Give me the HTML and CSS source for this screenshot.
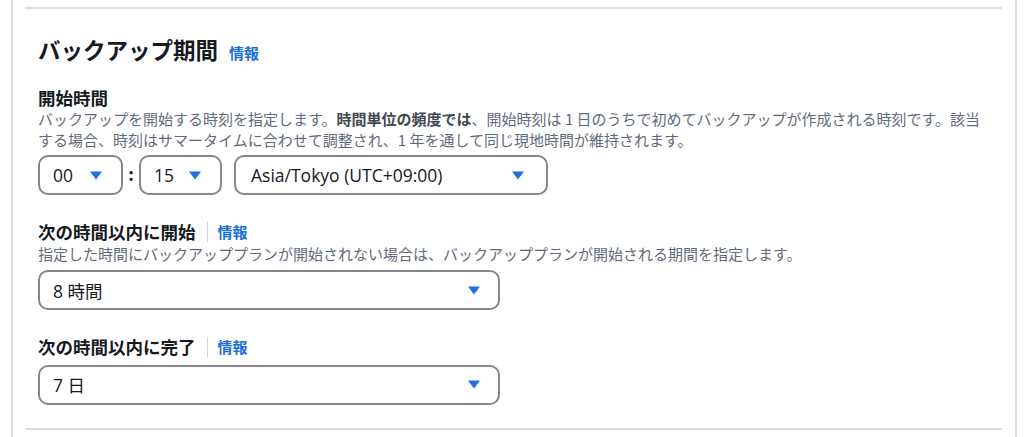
FILE: index.html
```html
<!DOCTYPE html>
<html lang="ja">
<head>
<meta charset="utf-8">
<link rel="stylesheet" href="styles.css">
</head>
<body>
<div class="frame">
  <section class="panel">
    <h2 class="title">バックアップ期間<a class="info info-title">情報</a></h2>

    <div class="field">
      <div class="label">開始時間</div>
      <p class="desc">バックアップを開始する時刻を指定します。<b>時間単位の頻度では</b>、開始時刻は 1 日のうちで初めてバックアップが作成される時刻です。該当する場合、時刻はサマータイムに合わせて調整され、1 年を通して同じ現地時間が維持されます。</p>
      <div class="time-row">
        <div class="select sel-hour"><span class="val">00</span><svg class="caret" viewBox="0 0 12 8"><polygon points="0,0 12,0 6,8"/></svg></div>
        <span class="colon">:</span>
        <div class="select sel-min"><span class="val">15</span><svg class="caret" viewBox="0 0 12 8"><polygon points="0,0 12,0 6,8"/></svg></div>
        <div class="select sel-tz"><span class="val">Asia/Tokyo (UTC+09:00)</span><svg class="caret" viewBox="0 0 12 8"><polygon points="0,0 12,0 6,8"/></svg></div>
      </div>
    </div>

    <div class="field">
      <div class="label">次の時間以内に開始<span class="sep"></span><a class="info">情報</a></div>
      <p class="desc">指定した時間にバックアッププランが開始されない場合は、バックアッププランが開始される期間を指定します。</p>
      <div class="select sel-wide"><span class="val">8 時間</span><svg class="caret" viewBox="0 0 12 8"><polygon points="0,0 12,0 6,8"/></svg></div>
    </div>

    <div class="field">
      <div class="label">次の時間以内に完了<span class="sep"></span><a class="info">情報</a></div>
      <div class="select sel-wide"><span class="val">7 日</span><svg class="caret" viewBox="0 0 12 8"><polygon points="0,0 12,0 6,8"/></svg></div>
    </div>
  </section>
</div>
</body>
</html>
```

FILE: styles.css
```css
* { box-sizing: border-box; }

html, body {
  margin: 0;
  padding: 0;
  background: #ffffff;
}

body {
  font-family: "Noto Sans CJK JP", "Open Sans", sans-serif;
  color: #16191f;
}

.frame {
  margin-left: 11px;
  width: 1006px;
  min-height: 437px;
  border-left: 2px solid #dcdcdf;
  border-right: 2px solid #dcdcdf;
  padding: 7px 13px 0 12px;
}

.panel {
  border-top: 2px solid #dcdcdf;
  border-bottom: 2px solid #dcdcdf;
  padding: 27px 13px 23px 13px;
}

.title {
  margin: 0 0 20px 0;
  font-size: 22.5px;
  line-height: 27.5px;
  font-weight: 700;
  display: flex;
  align-items: baseline;
}

.info {
  color: #1a6fd6;
  font-size: 15px;
  font-weight: 700;
  text-decoration: none;
}

.info-title {
  margin-left: 11px;
}

.field + .field {
  margin-top: 26px;
}

.label {
  font-size: 17.5px;
  line-height: 22.5px;
  font-weight: 700;
  display: flex;
  align-items: center;
}

.sep {
  display: inline-block;
  width: 1px;
  height: 20px;
  background: #d1d5db;
  margin: 0 10px 0 11px;
}

.desc {
  margin: 0;
  font-size: 15px;
  line-height: 20.5px;
  color: #5f6b7a;
}

.desc b {
  font-weight: 700;
  color: #414750;
  line-height: 20.5px;
}

.time-row {
  display: flex;
  align-items: center;
  margin-top: 5px;
}

.select {
  display: flex;
  align-items: center;
  justify-content: space-between;
  height: 40px;
  border: 2.5px solid #85878c;
  border-radius: 10px;
  padding: 0 19px 0 13px;
  font-family: "Open Sans", "Noto Sans CJK JP", sans-serif;
  font-size: 17.5px;
  color: #16191f;
  background: #fff;
}

.field > .select {
  margin-top: 6px;
}

.sel-hour { width: 85px; }
.sel-min { width: 83px; }
.sel-tz { width: 314px; margin-left: 12px; padding-left: 15px; padding-right: 22px; }
.sel-wide { width: 462px; padding-right: 18px; }

.colon {
  width: 16px;
  text-align: center;
  font-size: 17.5px;
  font-weight: 700;
  color: #16191f;
  position: relative;
  top: -2px;
}

.caret {
  width: 12px;
  height: 9px;
  fill: #1f6fe0;
  flex: none;
}
```
